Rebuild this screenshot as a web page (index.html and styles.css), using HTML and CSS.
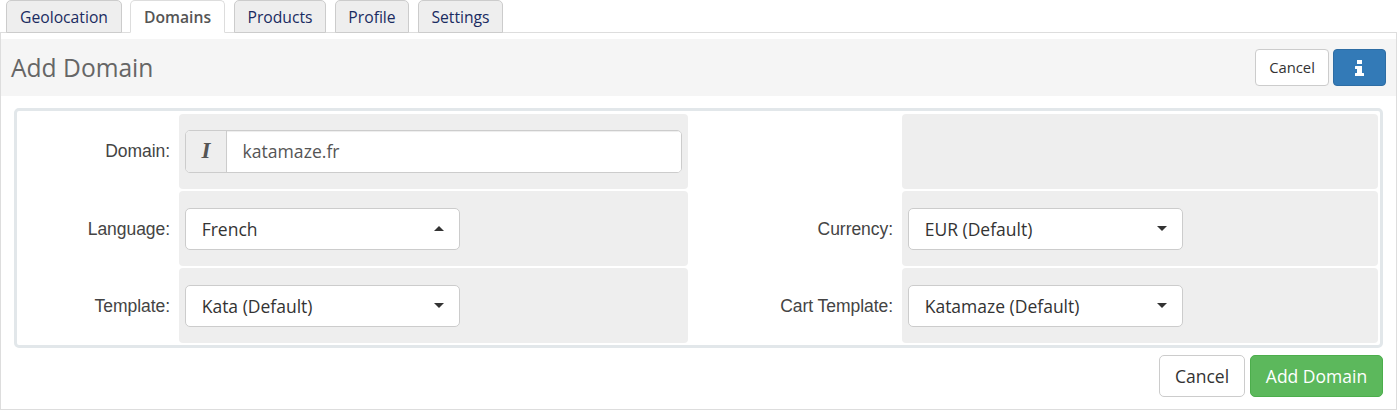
FILE: index.html
```html
<!DOCTYPE html>
<html lang="en">

<head>
  <meta charset="UTF-8">
  <meta name="viewport" content="width=device-width, initial-scale=1.0">
  <title>Add Domain</title>
  <link rel="stylesheet" href="styles.css">
</head>

<body>
<div class="page">
  <ul class="tabs">
    <li class="tab tab-geo"><a href="#">Geolocation</a></li>
    <li class="tab tab-domains active"><a href="#">Domains</a></li>
    <li class="tab tab-products"><a href="#">Products</a></li>
    <li class="tab tab-profile"><a href="#">Profile</a></li>
    <li class="tab tab-settings"><a href="#">Settings</a></li>
  </ul>
  <div class="panel">
    <div class="panel-header">
      <h2>Add Domain</h2>
      <button type="button" class="btn btn-small">Cancel</button>
      <button type="button" class="btn btn-info" aria-label="Info">
        <svg width="9" height="16" viewBox="0 0 9 16"><path fill="#fff" d="M2 0h5v4H2zM.5 6H7v7h1.500q.5 0 .5.5V16H0v-2.500q0-.5.5-.5H2V9H.5Q0 9 0 8.500v-2q0-.5.5-.5z"/></svg>
      </button>
    </div>
    <form class="form">
      <label class="label label-domain" for="domain">Domain:</label>
      <div class="cell">
        <div class="input-group">
          <span class="addon">I</span>
          <input type="text" id="domain" class="input" value="katamaze.fr">
        </div>
      </div>
      <span class="label"></span>
      <div class="cell"></div>

      <span class="label">Language:</span>
      <div class="cell">
        <button type="button" class="select">French <span class="caret caret-up"></span></button>
      </div>
      <span class="label">Currency:</span>
      <div class="cell">
        <button type="button" class="select">EUR (Default) <span class="caret"></span></button>
      </div>

      <span class="label">Template:</span>
      <div class="cell">
        <button type="button" class="select">Kata (Default) <span class="caret"></span></button>
      </div>
      <span class="label">Cart Template:</span>
      <div class="cell">
        <button type="button" class="select">Katamaze (Default) <span class="caret"></span></button>
      </div>
    </form>
    <div class="actions">
      <button type="button" class="btn btn-large">Cancel</button>
      <button type="button" class="btn btn-large btn-success">Add Domain</button>
    </div>
  </div>
</div>
</body>
</html>
```

FILE: styles.css
```css
* {
  box-sizing: border-box;
}
html,
body {
  margin: 0;
  background-color: #fff;
  font-family: 'Open Sans', sans-serif;
}
.page {
  display: flex;
  flex-direction: column;
  height: 410px;
}
.tabs {
  display: flex;
  height: 33px;
  margin: 0 0 -1px;
  padding: 0 6px;
  list-style: none;
  z-index: 1;
}
.tab {
  margin-right: 9px;
  border: 1px solid #ccc;
  border-radius: 5px 5px 0 0;
  background-color: #eee;
  text-align: center;
}
.tab a {
  display: block;
  font-size: 15.7px;
  line-height: 32px;
  color: #1a2b61;
  text-decoration: none;
}
.tab.active {
  border-color: #ddd;
  border-bottom-color: #fff;
  background-color: #fff;
}
.tab.active a {
  color: #555;
  font-weight: 600;
}
.tab-geo {
  width: 116px;
  margin-right: 8px;
}
.tab-domains {
  width: 95px;
}
.tab-products {
  width: 92px;
}
.tab-profile {
  width: 74px;
}
.tab-settings {
  width: 85px;
}
.panel {
  flex: 1;
  padding-top: 6px;
  border: 1px solid #ddd;
}
.panel-header {
  display: flex;
  align-items: center;
  gap: 4px;
  height: 57px;
  padding: 0 10px;
  background-color: #f5f5f5;
}
h2 {
  flex: 1;
  margin: 0;
  font-size: 24.6px;
  line-height: 34px;
  font-weight: 400;
  color: #666;
}
.btn {
  padding: 0;
  border: 1px solid #ccc;
  border-radius: 4px;
  background-color: #fff;
  font-family: inherit;
  color: #333;
}
.btn-small {
  width: 74px;
  height: 37px;
  padding-bottom: 2px;
  font-size: 14.8px;
}
.btn-info {
  display: flex;
  align-items: center;
  justify-content: center;
  width: 53px;
  height: 37px;
  border-color: #2e6da4;
  background-color: #337ab7;
}
.form {
  display: grid;
  grid-template-columns: 160px 509px 210px 476px;
  grid-template-rows: repeat(3, 75px);
  gap: 2px;
  width: 1369px;
  height: 240px;
  margin: 12px 0 0 13px;
  padding: 3px 0 0;
  border: 3px solid #e2e7ea;
  border-radius: 5px;
}
.label {
  align-self: center;
  padding-right: 7px;
  font-family: 'Liberation Sans', sans-serif;
  font-size: 17.5px;
  line-height: 24px;
  letter-spacing: -0.05px;
  color: #444;
  text-align: right;
}
.label-domain {
  padding-bottom: 2px;
}
.cell {
  display: flex;
  align-items: center;
  padding: 0 6px;
  border-radius: 4px;
  background-color: #eee;
}
.input-group {
  display: flex;
  width: 100%;
  height: 43px;
  border: 1px solid #ccc;
  border-radius: 5px;
  background-color: #fff;
  overflow: hidden;
}
.addon {
  width: 41px;
  border-right: 1px solid #ccc;
  background-color: #eee;
  font: italic bold 23px/40px 'Liberation Serif', serif;
  color: #555;
  text-align: center;
}
.input {
  flex: 1;
  padding: 0 15.5px 1px;
  border: 0;
  font-family: inherit;
  font-size: 17.6px;
  color: #555;
  box-shadow: inset 0 1px 1px rgba(0, 0, 0, 0.075);
}
.select {
  display: flex;
  align-items: center;
  justify-content: space-between;
  width: 275px;
  height: 42px;
  padding: 0 15px 0 15.7px;
  border: 1px solid #ccc;
  border-radius: 5px;
  background-color: #fff;
  font-family: inherit;
  font-size: 17.5px;
  color: #333;
}
.caret {
  border: 5px solid transparent;
  border-top-color: #333;
  border-bottom: 0;
}
.caret-up {
  border-top: 0;
  border-bottom: 5px solid #333;
}
.actions {
  display: flex;
  justify-content: flex-end;
  gap: 5px;
  padding: 7px 13px 0;
}
.btn-large {
  width: 86px;
  height: 42px;
  border-radius: 5px;
  font-size: 17.5px;
}
.btn-success {
  width: 133px;
  border-color: #4cae4c;
  background-color: #5cb85c;
  color: #fff;
}
```
